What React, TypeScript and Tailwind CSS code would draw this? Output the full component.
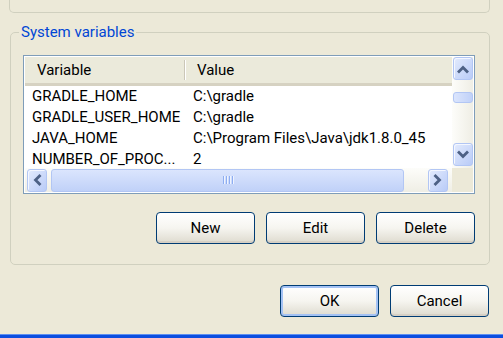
import React from 'react';

type Dir = 'up' | 'down' | 'left' | 'right';

const arrows: Record<Dir, string> = {
  up: 'M2 8.5 L6 4.5 L10 8.5',
  down: 'M2 3.5 L6 7.5 L10 3.5',
  left: 'M8.5 2 L4.5 6 L8.5 10',
  right: 'M3.5 2 L7.5 6 L3.5 10',
};

function ScrollButton({ dir }: { dir: Dir }) {
  return (
    <div className="flex items-center justify-center w-[20px] h-[23px] rounded-[3px] border border-[#b2c6f4] bg-linear-to-br from-[#e3ebfd] to-[#b9cbf7] shadow-[inset_1px_1px_0_#f4f7ff]">
      <svg width="12" height="12" viewBox="0 0 12 12">
        <path d={arrows[dir]} fill="none" stroke="#4d6185" strokeWidth="2.8" strokeLinecap="square" />
      </svg>
    </div>
  );
}

function DialogButton({ label, isDefault = false }: { label: string; isDefault?: boolean }) {
  return (
    <button
      className={`w-[99px] h-[32px] rounded-[4px] border border-[#003c74] bg-linear-to-b from-white via-[#f6f5f0] to-[#dedbcf] text-[15px] text-black ${
        isDefault ? 'shadow-[inset_0_0_0_2px_#a4c2f4]' : 'shadow-[inset_0_-2px_0_#d6d0c5]'
      }`}
    >
      {label}
    </button>
  );
}

const rows = [
  { name: 'GRADLE_HOME', value: 'C:\\gradle' },
  { name: 'GRADLE_USER_HOME', value: 'C:\\gradle' },
  { name: 'JAVA_HOME', value: 'C:\\Program Files\\Java\\jdk1.8.0_45' },
  { name: 'NUMBER_OF_PROC...', value: '2' },
];

export default function App() {
  return (
    <div className="w-[503px] h-[338px] bg-[#ece9d8] flex flex-col overflow-hidden font-['Roboto',sans-serif]">
      {/* bottom of the user variables group */}
      <div className="ml-[9px] mr-[13px] h-[13px] border border-t-0 border-[#d0d0bf] rounded-b-[5px]" />

      <fieldset className="ml-[10px] mr-[13px] mt-[10px] border border-[#d0d0bf] rounded-[5px] pl-[12px] pr-[14px] pb-[20px]">
        <legend className="-ml-[4px] px-[2px] text-[15px] leading-[18px] text-[#0046d5]">System variables</legend>

        <div className="mt-[14px] h-[139px] border border-[#7f9db9] bg-white p-[1px] flex flex-col">
          <div className="flex flex-1 min-h-0">
            <div className="flex-1 flex flex-col overflow-hidden">
              <div className="h-[29px] flex items-center bg-[#ebeadb] border-b-[3px] border-[#d6d2c2] text-[15px] text-black shrink-0">
                <div className="w-[159px] pl-[12px]">Variable</div>
                <div className="w-[1px] h-[20px] bg-[#cbc7b8] shadow-[1px_0_0_#fff]" />
                <div className="pl-[12px]">Value</div>
              </div>
              {rows.map((r) => (
                <div key={r.name} className="h-[21px] flex items-center shrink-0 text-[15px] text-black whitespace-nowrap">
                  <div className="w-[161px] pl-[7px]">{r.name}</div>
                  <div className="pl-[7px]">{r.value}</div>
                </div>
              ))}
            </div>
            {/* vertical scrollbar */}
            <div className="w-[21px] flex flex-col pl-[1px] bg-linear-to-r from-[#fdfdfa] to-[#efeee5]">
              <ScrollButton dir="up" />
              <div className="mt-[12px] h-[11px] w-[20px] rounded-[3px] border border-[#b2c6f4] bg-linear-to-r from-[#dbe5fd] to-[#c0d1f8]" />
              <div className="flex-1" />
              <ScrollButton dir="down" />
              <div className="h-[2px]" />
            </div>
          </div>
          {/* horizontal scrollbar */}
          <div className="flex h-[24px] shrink-0">
            <div className="flex-1 flex items-center pl-[2px] pr-[4px] bg-linear-to-b from-[#fdfdfa] to-[#efeee5]">
              <ScrollButton dir="left" />
              <div className="ml-[4px] w-[353px] h-[23px] rounded-[3px] border border-[#b2c6f4] bg-linear-to-b from-[#dbe5fd] to-[#c0d1f8] flex items-center justify-center gap-[2px]">
                {[0, 1, 2, 3].map((i) => (
                  <div key={i} className="w-[1px] h-[8px] bg-[#8eaef2] shadow-[1px_0_0_#eef3ff]" />
                ))}
              </div>
              <div className="flex-1" />
              <ScrollButton dir="right" />
            </div>
            <div className="w-[21px] bg-[#ece9d8]" />
          </div>
        </div>

        <div className="mt-[18px] flex justify-end gap-[11px]">
          <DialogButton label="New" />
          <DialogButton label="Edit" />
          <DialogButton label="Delete" />
        </div>
      </fieldset>

      <div className="mt-[20px] flex justify-end gap-[11px] pr-[14px]">
        <DialogButton label="OK" isDefault />
        <DialogButton label="Cancel" />
      </div>

      <div className="mt-auto h-[3px] bg-[#0b4ee0] shadow-[0_-1px_0_#5d8ff0]" />
    </div>
  );
}
